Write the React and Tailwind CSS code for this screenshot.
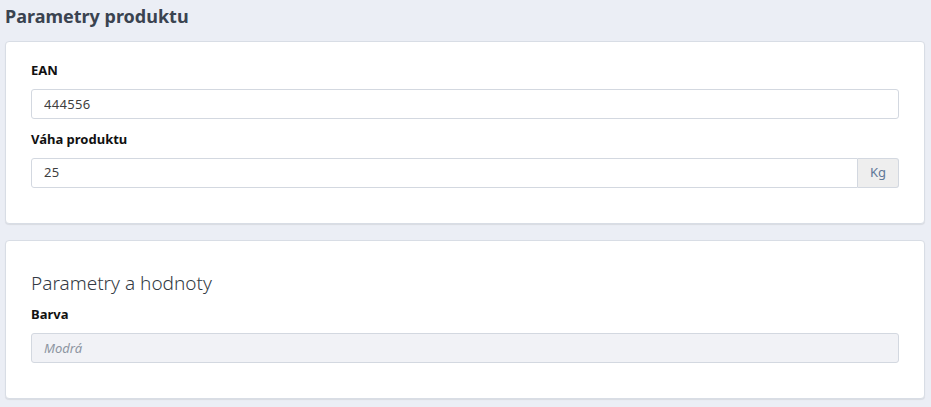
import React from 'react';

function Field({ label, children }) {
  return (
    <div>
      <label className="block text-[13px] font-bold leading-[20px] text-[#111] mb-[9px]">
        {label}
      </label>
      {children}
    </div>
  );
}

export default function App() {
  return (
    <div
      className="min-h-screen bg-[#ebeef5] pl-[5px] pr-[6px] pb-[8px]"
      style={{ fontFamily: '"Noto Sans", "Open Sans", sans-serif' }}
    >
      {/* Header */}
      <h1 className="text-[18px] font-bold leading-[33px] text-[#3a4350] mb-[8px]">
        Parametry produktu
      </h1>

      {/* Basic params */}
      <div className="bg-white border border-[#d8dde5] rounded-[4px] shadow-[0_1px_1px_rgba(0,0,0,0.08)] pt-[18px] px-[25px] pb-[35px]">
        <Field label="EAN">
          <input
            readOnly
            value="444556"
            className="w-full h-[30px] px-[12px] text-[13px] tracking-[0.3px] text-[#3e3e3e] border border-[#d3d8e0] rounded-[3px] outline-none mb-[10px]"
          />
        </Field>
        <Field label="Váha produktu">
          <div className="flex h-[30px]">
            <input
              readOnly
              value="25"
              className="flex-1 min-w-0 px-[12px] text-[13px] tracking-[0.3px] text-[#3e3e3e] border border-[#d3d8e0] rounded-l-[3px] outline-none"
            />
            <span className="flex items-center justify-center w-[41px] bg-[#eeeeee] border border-l-0 border-[#d3d8e0] rounded-r-[3px] text-[13px] text-[#5f7898]">
              Kg
            </span>
          </div>
        </Field>
      </div>

      {/* Parameters and values */}
      <div className="mt-[16px] bg-white border border-[#d8dde5] rounded-[4px] shadow-[0_1px_1px_rgba(0,0,0,0.08)] pt-[30px] px-[25px] pb-[35px]">
        <h2 className="text-[19px] font-light leading-[24px] text-[#333a44] mb-[9px]">
          Parametry a hodnoty
        </h2>
        <Field label="Barva">
          <input
            disabled
            placeholder="Modrá"
            className="w-full h-[30px] px-[12px] text-[13px] italic bg-[#f1f2f6] placeholder:text-[#8d95a1] border border-[#d3d8e0] rounded-[3px] outline-none"
          />
        </Field>
      </div>
    </div>
  );
}
